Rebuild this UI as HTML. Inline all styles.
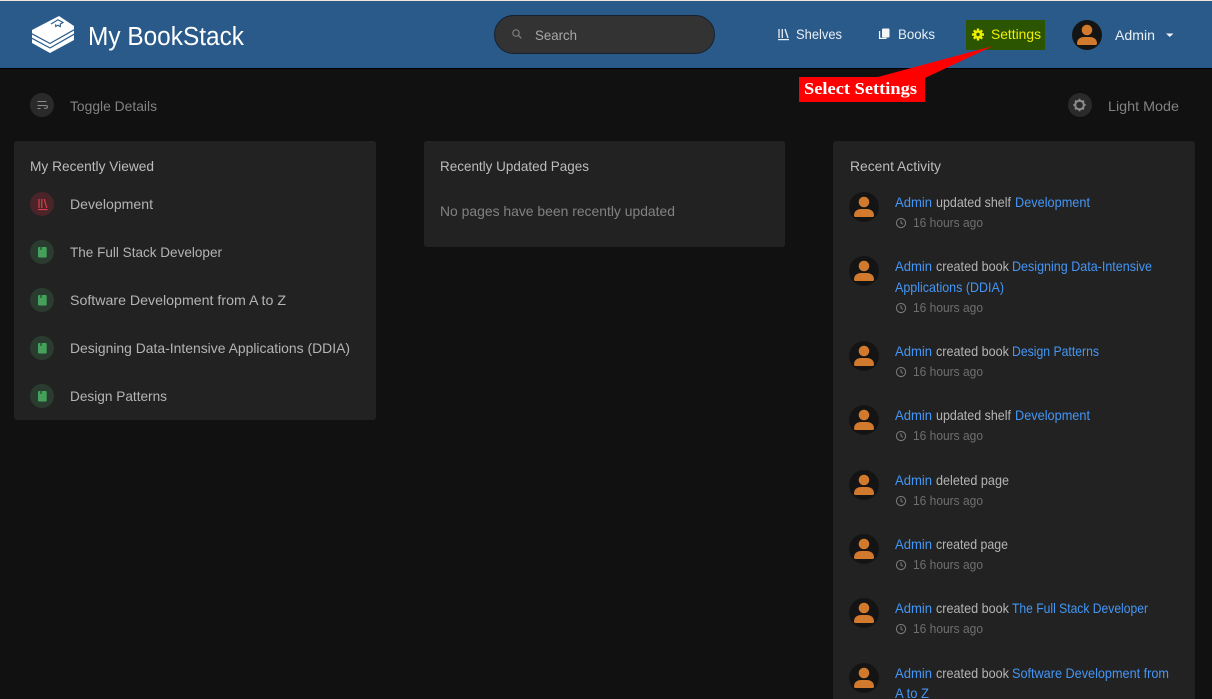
<!DOCTYPE html>
<html><head><meta charset="utf-8"><title>My BookStack</title>
<style>
html,body{margin:0;padding:0;background:#111;width:1212px;height:699px;overflow:hidden}
svg{display:block;position:absolute;left:0;top:0}
text{font-family:"Liberation Sans",sans-serif;font-size:14px;white-space:pre}
.l{fill:#b4b4b4}.t{fill:#bcbcbc}.g{fill:#828282}.h{fill:#6f6f6f;font-size:13px}
.a{fill:#4496f5}.b{fill:#b4b4b4}.n{fill:#eaeff4}
</style></head><body>
<svg width="1212" height="699" viewBox="0 0 1212 699" xmlns="http://www.w3.org/2000/svg">
<defs>
<g id="av"><circle cx="0" cy="0" r="15" fill="#141414"/><circle cx="0" cy="-5" r="5.300" fill="#d17a2e"/><path d="M-10 8.500c0-4 3-6.500 7-6.500h6c4 0 7 2.500 7 6.500c0 1-.5 1.500-1.500 1.500h-17c-1 0-1.500-.5-1.500-1.500z" fill="#d17a2e"/></g>
<g id="ck" fill="none" stroke="#777" stroke-width="1.100"><circle cx="0" cy="0" r="4.600"/><path d="M0-2.600V0l1.900 1.200"/></g>
<g id="bk"><circle r="12" fill="#2a3c2f"/><rect x="-4" y="-5" width="8.700" height="10.500" rx="1" fill="#45a05c"/><rect x="-2" y="-5" width="2" height="3" fill="#2c6b40"/></g>
</defs>

<rect width="1212" height="699" fill="#111"/>
<rect width="1212" height="1" fill="#f4e3dc"/>
<rect y="1" width="1212" height="67" fill="#2a5a8a"/>
<rect y="68" width="1212" height="1" fill="#000"/>

<!-- logo -->
<path d="M32 30L59 16l15 10v14L50 53 32 43z" fill="#fff"/>
<path d="M32 33.800L50 43.500 74 29.800M32 38.300L50 48 74 34.300" fill="none" stroke="#2a5a8a" stroke-width="1.200"/>
<path d="M51 24l7-4.200 5 2.700-2.700 1.500v2.700l-2.300-1.400-2.300 1.200v-2.200" fill="none" stroke="#2a5a8a" stroke-width="1.100"/>
<text x="88" y="45" style="font-size:25.500px" fill="#fff" textLength="156" lengthAdjust="spacingAndGlyphs">My BookStack</text>

<!-- search -->
<rect x="494.500" y="15.500" width="220" height="38" rx="19" fill="#333" stroke="#16222e" stroke-width="1"/>
<circle cx="516" cy="33" r="3.200" fill="none" stroke="#7f7f7f" stroke-width="1.200"/>
<path d="M518.300 35.300l3 3" stroke="#7f7f7f" stroke-width="1.300"/>
<text x="535" y="40" fill="#a8a8a8" textLength="42" lengthAdjust="spacingAndGlyphs">Search</text>

<!-- nav -->
<path d="M779 29v9M782.300 29v9M785 29l3 9" stroke="#e8eef4" stroke-width="1.300" fill="none"/>
<rect x="778" y="39" width="11" height="1.200" fill="#e8eef4"/>
<text x="796" y="39" class="n" textLength="46" lengthAdjust="spacingAndGlyphs">Shelves</text>
<rect x="882" y="28.500" width="7.500" height="9" rx="1" fill="#f4f6f8"/><path d="M879.600 31v7.400h7" fill="none" stroke="#f4f6f8" stroke-width="1.300"/>
<text x="898" y="39" class="n" textLength="37" lengthAdjust="spacingAndGlyphs">Books</text>

<rect x="966" y="20" width="79" height="30" fill="#2b5500"/>
<g transform="translate(978,34.500)" fill="#eef000"><circle r="4.300"/><g stroke="#eef000" stroke-width="2.400"><path d="M0-6V6M-6 0H6M-4.200-4.200L4.200 4.200M-4.200 4.200L4.200-4.200"/></g><circle r="1.700" fill="#2b5500"/></g>
<text x="991" y="39" fill="#f0f000" textLength="50" lengthAdjust="spacingAndGlyphs">Settings</text>

<use href="#av" transform="translate(1087,35)"/>
<text x="1115" y="40" class="n" textLength="40" lengthAdjust="spacingAndGlyphs">Admin</text>
<path d="M1166 33.500h7.500l-3.750 3.500z" fill="#f0f4f8"/>

<!-- annotation -->
<path d="M993 46L874 78H925z" fill="#f00"/>
<rect x="799" y="77" width="126" height="25" fill="#f00"/>
<text x="804" y="94" fill="#fff" style="font-family:'Liberation Serif',serif;font-weight:bold;font-size:17px" textLength="113" lengthAdjust="spacingAndGlyphs">Select Settings</text>

<!-- toggles -->
<circle cx="42" cy="105" r="12" fill="#2a2a2a"/>
<path d="M37.500 101.500h9M37.500 105.500h8.500q1.500 0 1.500 1.400t-1.500 1.400h-2M37.500 108.500h3" fill="none" stroke="#8c8c8c" stroke-width="1"/>
<text x="70" y="111" class="g" textLength="87" lengthAdjust="spacingAndGlyphs">Toggle Details</text>
<circle cx="1080" cy="105" r="12" fill="#2a2a2a"/>
<g transform="translate(1079.500,105)"><circle r="4.300" fill="none" stroke="#8c8c8c" stroke-width="2"/><path d="M0-6.200V-4M0 4V6.200M-6.200 0H-4M4 0H6.200M-4.400-4.400L-2.900-2.900M2.900 2.900L4.400 4.400M-4.400 4.400L-2.900 2.900M2.900-2.900L4.400-4.400" stroke="#8c8c8c" stroke-width="1.800"/></g>
<text x="1108" y="111" class="g" textLength="71" lengthAdjust="spacingAndGlyphs">Light Mode</text>

<!-- cards -->
<rect x="14" y="141" width="362" height="279" rx="3" fill="#222"/>
<rect x="424" y="141" width="361" height="106" rx="3" fill="#222"/>
<rect x="833" y="141" width="362" height="570" rx="3" fill="#222"/>

<text x="30" y="171" class="t" textLength="124" lengthAdjust="spacingAndGlyphs">My Recently Viewed</text>
<text x="440" y="171" class="t" textLength="149" lengthAdjust="spacingAndGlyphs">Recently Updated Pages</text>
<text x="850" y="171" class="t" textLength="91" lengthAdjust="spacingAndGlyphs">Recent Activity</text>
<text x="440" y="216" class="g" textLength="235" lengthAdjust="spacingAndGlyphs">No pages have been recently updated</text>

<!-- left list -->
<circle cx="42" cy="204" r="12" fill="#4a2428"/>
<path d="M39 199v9M41.800 199v9M44.200 199l2.600 9" stroke="#d8404c" stroke-width="1.200" fill="none"/>
<rect x="38" y="209" width="9.500" height="1.100" fill="#d8404c"/>
<text x="70" y="209" class="l" textLength="83" lengthAdjust="spacingAndGlyphs">Development</text>
<use href="#bk" x="42" y="252"/>
<text x="70" y="257" class="l" textLength="152" lengthAdjust="spacingAndGlyphs">The Full Stack Developer</text>
<use href="#bk" x="42" y="300"/>
<text x="70" y="305" class="l" textLength="216" lengthAdjust="spacingAndGlyphs">Software Development from A to Z</text>
<use href="#bk" x="42" y="348"/>
<text x="70" y="353" class="l" textLength="280" lengthAdjust="spacingAndGlyphs">Designing Data-Intensive Applications (DDIA)</text>
<use href="#bk" x="42" y="396"/>
<text x="70" y="401" class="l" textLength="97" lengthAdjust="spacingAndGlyphs">Design Patterns</text>

<!-- activity -->
<use href="#av" x="864" y="207"/>
<text x="895" y="207" class="a" textLength="37" lengthAdjust="spacingAndGlyphs">Admin</text>
<text x="936" y="207" class="b" textLength="75" lengthAdjust="spacingAndGlyphs">updated shelf</text>
<text x="1015" y="207" class="a" textLength="75" lengthAdjust="spacingAndGlyphs">Development</text>
<use href="#ck" x="901" y="223"/>
<text x="913" y="227" class="h" textLength="70" lengthAdjust="spacingAndGlyphs">16 hours ago</text>

<use href="#av" x="864" y="271"/>
<text x="895" y="271" class="a" textLength="37" lengthAdjust="spacingAndGlyphs">Admin</text>
<text x="936" y="271" class="b" textLength="73" lengthAdjust="spacingAndGlyphs">created book</text>
<text x="1012" y="271" class="a" textLength="140" lengthAdjust="spacingAndGlyphs">Designing Data-Intensive</text>
<text x="895" y="292" class="a" textLength="109" lengthAdjust="spacingAndGlyphs">Applications (DDIA)</text>
<use href="#ck" x="901" y="308"/>
<text x="913" y="312" class="h" textLength="70" lengthAdjust="spacingAndGlyphs">16 hours ago</text>

<use href="#av" x="864" y="356"/>
<text x="895" y="356" class="a" textLength="37" lengthAdjust="spacingAndGlyphs">Admin</text>
<text x="936" y="356" class="b" textLength="73" lengthAdjust="spacingAndGlyphs">created book</text>
<text x="1012" y="356" class="a" textLength="87" lengthAdjust="spacingAndGlyphs">Design Patterns</text>
<use href="#ck" x="901" y="372"/>
<text x="913" y="376" class="h" textLength="70" lengthAdjust="spacingAndGlyphs">16 hours ago</text>

<use href="#av" x="864" y="420"/>
<text x="895" y="420" class="a" textLength="37" lengthAdjust="spacingAndGlyphs">Admin</text>
<text x="936" y="420" class="b" textLength="75" lengthAdjust="spacingAndGlyphs">updated shelf</text>
<text x="1015" y="420" class="a" textLength="75" lengthAdjust="spacingAndGlyphs">Development</text>
<use href="#ck" x="901" y="436"/>
<text x="913" y="440" class="h" textLength="70" lengthAdjust="spacingAndGlyphs">16 hours ago</text>

<use href="#av" x="864" y="485"/>
<text x="895" y="485" class="a" textLength="37" lengthAdjust="spacingAndGlyphs">Admin</text>
<text x="936" y="485" class="b" textLength="73" lengthAdjust="spacingAndGlyphs">deleted page</text>
<use href="#ck" x="901" y="501"/>
<text x="913" y="505" class="h" textLength="70" lengthAdjust="spacingAndGlyphs">16 hours ago</text>

<use href="#av" x="864" y="549"/>
<text x="895" y="549" class="a" textLength="37" lengthAdjust="spacingAndGlyphs">Admin</text>
<text x="936" y="549" class="b" textLength="72" lengthAdjust="spacingAndGlyphs">created page</text>
<use href="#ck" x="901" y="565"/>
<text x="913" y="569" class="h" textLength="70" lengthAdjust="spacingAndGlyphs">16 hours ago</text>

<use href="#av" x="864" y="613"/>
<text x="895" y="613" class="a" textLength="37" lengthAdjust="spacingAndGlyphs">Admin</text>
<text x="936" y="613" class="b" textLength="73" lengthAdjust="spacingAndGlyphs">created book</text>
<text x="1012" y="613" class="a" textLength="136" lengthAdjust="spacingAndGlyphs">The Full Stack Developer</text>
<use href="#ck" x="901" y="629"/>
<text x="913" y="633" class="h" textLength="70" lengthAdjust="spacingAndGlyphs">16 hours ago</text>

<use href="#av" x="864" y="678"/>
<text x="895" y="678" class="a" textLength="37" lengthAdjust="spacingAndGlyphs">Admin</text>
<text x="936" y="678" class="b" textLength="73" lengthAdjust="spacingAndGlyphs">created book</text>
<text x="1012" y="678" class="a" textLength="157" lengthAdjust="spacingAndGlyphs">Software Development from</text>
<text x="895" y="698" class="a" textLength="34" lengthAdjust="spacingAndGlyphs">A to Z</text>
</svg>
</body></html>
